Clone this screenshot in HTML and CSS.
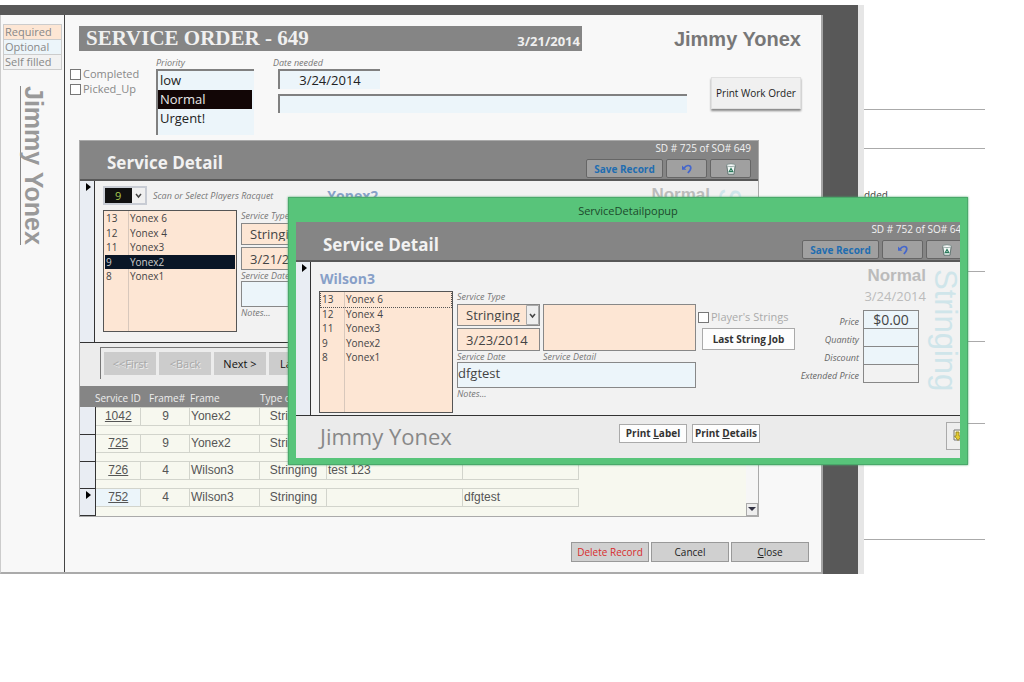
FILE: index.html
```html
<!DOCTYPE html>
<html lang="en">
<head>
<meta charset="utf-8">
<title>Service Order</title>
<link rel="stylesheet" href="styles.css">
</head>
<body>
<svg class="defs" width="0" height="0" aria-hidden="true">
  <symbol id="undo" viewBox="0 0 12 12">
    <path d="M1 2.6v4.2h4.4z" fill="#4466cc"/>
    <path d="M3.2 5.2C4.6 2 9.6 1.400 9.800 4.800c.1 2-1.300 3.500-3 5.200" fill="none" stroke="#4466cc" stroke-width="1.7"/>
  </symbol>
  <symbol id="bin" viewBox="0 0 12 12">
    <path d="M1.800 2.200 3 11.200h6l1.200-9z" fill="#f2f8f6" stroke="#48605c" stroke-width=".8"/>
    <ellipse cx="6" cy="2.200" rx="4.300" ry="1.300" fill="#fff" stroke="#708884" stroke-width=".7"/>
    <path d="M4.200 8.700 6 5.500l1.800 3.200z" fill="none" stroke="#2b7a5c" stroke-width="1.200"/>
  </symbol>
  <symbol id="exit" viewBox="0 0 14 14">
    <path d="M3 2h9v10H3z" fill="#fbf9d8" stroke="#777" stroke-width="1"/>
    <path d="M5 4h3v4h2.500L7 12.500 3.500 8H5z" fill="#e3cb2f" stroke="#8a7a20" stroke-width=".8"/>
    <path d="M9 3h3v10l-3-2z" fill="#5d6f52"/>
  </symbol>
</svg>
<div class="desktop">
  <main class="window">
    <div class="form">
      <aside class="strip">
        <ul class="legend">
          <li class="required">Required</li>
          <li class="optional">Optional</li>
          <li class="filled">Self filled</li>
        </ul>
        <div class="side-name">Jimmy Yonex</div>
      </aside>
      <div class="content">
        <header class="order-head">
          <div class="order-bar"><h1>SERVICE ORDER - 649</h1><span>3/21/2014</span></div>
          <div class="customer">Jimmy Yonex</div>
        </header>
        <section class="order-fields">
          <div class="flags">
            <label class="check"><input type="checkbox">Completed</label>
            <label class="check"><input type="checkbox">Picked_Up</label>
          </div>
          <div class="priority">
            <span class="hint" id="priority">Priority</span>
            <ul class="sunken" role="listbox" aria-labelledby="priority">
              <li role="option">low</li>
              <li role="option" aria-selected="true" class="chosen">Normal</li>
              <li role="option">Urgent!</li>
            </ul>
          </div>
          <div class="needed">
            <label class="hint" for="needed">Date needed</label>
            <input class="sunken date" id="needed" value="3/24/2014">
            <input class="sunken memo" aria-label="Memo">
          </div>
          <button class="print-order">Print Work Order</button>
        </section>

        <section class="panel">
          <div class="detail">
            <header class="detail-head">
              <h2>Service Detail</h2>
              <div class="detail-tools">
                <span>SD # 725 of SO# 649</span>
                <div class="tools">
                  <button class="save">Save Record</button>
                  <button aria-label="Undo"><svg><use href="#undo"/></svg></button>
                  <button aria-label="Delete"><svg><use href="#bin"/></svg></button>
                </div>
              </div>
            </header>
            <div class="record">
              <div class="selector"><i></i></div>
              <div class="record-body">
                <div class="record-left">
                  <div class="scan">
                    <select class="frame-pick" id="pick"><option>9</option></select>
                    <label class="hint" for="pick">Scan or Select Players Racquet</label>
                    <strong class="racquet">Yonex2</strong>
                  </div>
                  <div class="record-fields">
                    <ul class="frames">
                      <li><b>13</b>Yonex 6</li>
                      <li><b>12</b>Yonex 4</li>
                      <li><b>11</b>Yonex3</li>
                      <li class="chosen"><b>9</b>Yonex2</li>
                      <li><b>8</b>Yonex1</li>
                    </ul>
                    <div class="fields">
                      <label class="hint" for="type1">Service Type</label>
                      <select class="box type" id="type1"><option>Stringing</option></select>
                      <input class="box day" id="day1" value="3/21/2014">
                      <label class="hint" for="day1">Service Date</label>
                      <input class="box notes" id="notes1">
                      <label class="hint" for="notes1">Notes...</label>
                    </div>
                  </div>
                </div>
                <div class="record-right">
                  <div class="status"><strong>Normal</strong></div>
                  <div class="watermark">Stringing</div>
                </div>
              </div>
            </div>
          </div>
          <nav class="pager">
            <div class="pager-frame">
              <button disabled>&lt;&lt;First</button>
              <button disabled>&lt;Back</button>
              <button>Next &gt;</button>
              <button>Last &gt;</button>
            </div>
          </nav>
          <div class="lines">
            <table>
              <colgroup><col class="c-mark"><col class="c-id"><col class="c-num"><col class="c-frame"><col class="c-type"><col class="c-detail"><col class="c-notes"><col></colgroup>
              <thead><tr><th></th><th>Service ID</th><th>Frame#</th><th>Frame</th><th>Type of</th><th></th><th></th><th></th></tr></thead>
              <tbody>
                <tr><td></td><td><a href="#">1042</a></td><td><span>9</span></td><td><span>Yonex2</span></td><td><span>Stringing</span></td><td><span></span></td><td><span></span></td><td></td></tr>
                <tr><td></td><td><a href="#">725</a></td><td><span>9</span></td><td><span>Yonex2</span></td><td><span>Stringing</span></td><td><span></span></td><td><span></span></td><td></td></tr>
                <tr><td></td><td><a href="#">726</a></td><td><span>4</span></td><td><span>Wilson3</span></td><td><span>Stringing</span></td><td><span>test 123</span></td><td><span></span></td><td></td></tr>
                <tr class="current"><td><i></i></td><td><a href="#">752</a></td><td><span>4</span></td><td><span>Wilson3</span></td><td><span>Stringing</span></td><td><span></span></td><td><span>dfgtest</span></td><td></td></tr>
              </tbody>
            </table>
            <div class="scroll"><button aria-label="Scroll down"><i></i></button></div>
          </div>
        </section>
        <footer class="actions">
          <button class="delete">Delete Record</button>
          <button>Cancel</button>
          <button><u>C</u>lose</button>
        </footer>
      </div>
    </div>
  </main>
  <aside class="report">
    <hr class="r1"><hr class="r2">
    <p>dded.</p>
    <hr class="r3"><hr class="r4"><hr class="r5"><hr class="r6">
  </aside>

  <section class="popup" role="dialog" aria-labelledby="popup-title">
    <div class="popup-title" id="popup-title">ServiceDetailpopup</div>
    <div class="popup-view">
      <div class="popup-form">
        <div class="detail">
          <header class="detail-head">
            <h2>Service Detail</h2>
            <div class="detail-tools">
              <span>SD # 752 of SO# 649</span>
              <div class="tools">
                <button class="save">Save Record</button>
                <button aria-label="Undo"><svg><use href="#undo"/></svg></button>
                <button aria-label="Delete"><svg><use href="#bin"/></svg></button>
              </div>
            </div>
          </header>
          <div class="record">
            <div class="selector"><i></i></div>
            <div class="record-body">
              <div class="record-left">
                <div class="scan"><strong class="racquet">Wilson3</strong></div>
                <div class="record-fields">
                  <ul class="frames">
                    <li class="focus"><b>13</b>Yonex 6</li>
                    <li><b>12</b>Yonex 4</li>
                    <li><b>11</b>Yonex3</li>
                    <li><b>9</b>Yonex2</li>
                    <li><b>8</b>Yonex1</li>
                  </ul>
                  <div class="fields">
                    <label class="hint" for="type2">Service Type</label>
                    <select class="box type" id="type2"><option>Stringing</option></select>
                    <input class="box day" id="day2" value="3/23/2014">
                    <textarea class="box text" id="text2"></textarea>
                    <label class="hint" for="day2">Service Date</label>
                    <label class="hint" for="text2">Service Detail</label>
                    <input class="box notes" id="notes2" value="dfgtest">
                    <label class="hint" for="notes2">Notes...</label>
                  </div>
                  <div class="strings">
                    <label class="check"><input type="checkbox">Player's Strings</label>
                    <button class="white">Last String Job</button>
                  </div>
                </div>
              </div>
              <div class="record-right">
                <div class="status">
                  <strong>Normal</strong>
                  <span>3/24/2014</span>
                  <div class="prices">
                    <label for="price">Price</label><input id="price" value="$0.00">
                    <label for="qty">Quantity</label><input id="qty">
                    <label for="disc">Discount</label><input id="disc">
                    <label for="ext">Extended Price</label><input id="ext" class="plain" readonly>
                  </div>
                </div>
                <div class="watermark">Stringing</div>
              </div>
            </div>
          </div>
        </div>
        <footer class="popup-foot">
          <div class="popup-name">Jimmy Yonex</div>
          <button class="white">Print <u>L</u>abel</button>
          <button class="white">Print <u>D</u>etails</button>
          <button class="exit" aria-label="Close form"><svg><use href="#exit"/></svg></button>
        </footer>
      </div>
    </div>
  </section>
</div>
</body>
</html>
```
FILE: styles.css
```css
* { box-sizing: border-box; }
body { margin: 0; background: #fff; font-family: "Open Sans", "Noto Sans", sans-serif; font-size: 11px; line-height: 14px; color: #444; }
ul, h1, h2, p, hr { margin: 0; padding: 0; }
ul { list-style: none; }
button, input, select, textarea { font: inherit; color: inherit; margin: 0; border-radius: 0; }
button { padding: 0; white-space: nowrap; }
select { appearance: none; }
textarea { resize: none; }
.defs { display: block; }
.desktop { position: relative; display: flex; align-items: flex-start; min-height: 100vh; min-width: 1000px; padding-top: 5px; }
.hint { display: block; font-size: 9px; line-height: 12px; font-style: italic; color: #777; white-space: nowrap; }

/* main window */
.window { flex: 1; background: #585858; padding: 10px 35px 0 0; border-right: 6px solid #e6e6e6; }
.form { display: flex; background: #f8f8f8; border-left: 1px solid #ccc; border-right: 2px solid #a5a5a5; border-bottom: 2px solid #aaa; }
.strip { flex: 0 0 64px; padding: 9px 2px 0; border-right: 1px solid #444; }
.legend li { height: 15px; border: 1px solid #ccc; border-bottom: 0; padding-left: 1px; color: #888; line-height: 14px; }
.legend li:last-child { border-bottom: 1px solid #ccc; height: 16px; }
.required { background: #fde6d4; }
.optional { background: #ecf5fa; }
.filled { background: #f2f2f2; }
.side-name { writing-mode: vertical-rl; margin: 16px 0 0 17px; border-left: 1px solid #888; font: bold 25px/26px "Liberation Sans", sans-serif; color: #999; }
.content { flex: 1; min-width: 0; padding: 9px 12px 10px 14px; }
.order-head { display: flex; justify-content: space-between; align-items: center; padding-right: 8px; }
.order-bar { flex: 0 0 503px; height: 25px; display: flex; justify-content: space-between; align-items: center; background: #858585; padding: 0 2px 0 7px; color: #f0f0f0; }
.order-bar h1 { font: bold 21px/25px "Liberation Serif", serif; }
.order-bar span { font-size: 13px; font-weight: bold; padding-top: 6px; }
.customer { font: bold 20px/26px "Liberation Sans", sans-serif; color: #777; padding-top: 2px; }

.order-fields { display: flex; padding: 5px 8px 5px 0; margin-left: -9px; }
.flags { flex: 0 0 86px; padding-top: 10px; display: flex; flex-direction: column; gap: 1px; }
.check { display: flex; align-items: center; gap: 2px; color: #888; white-space: nowrap; }
.check input { appearance: none; width: 11px; height: 11px; border: 1px solid #777; background: #fff; flex: none; }
.priority { flex: 0 0 98px; }
.sunken { border: 0; border-top: 2px solid #808080; border-left: 2px solid #808080; background: #ecf5fa; color: #222; }
.priority .sunken { height: 66px; font-size: 13px; line-height: 19px; padding-right: 2px; }
.priority li { padding-left: 2px; }
.priority .chosen { background: #120606; color: #e8e8e8; }
.needed { flex: 1; padding-left: 24px; display: flex; flex-direction: column; align-items: flex-start; }
.needed .hint { margin-left: -5px; }
.date { width: 102px; height: 20px; font-size: 13px; text-align: center; padding: 0; }
.memo { width: 100%; height: 19px; margin-top: 5px; }
.print-order { width: 90px; height: 32px; margin: 20px 0 0 24px; border: 1px solid #e0e0e0; background: #f0f0f0; box-shadow: 0 2px 2px #888; color: #222; font-size: 10px; }

/* service detail form, shared by panel and popup */
.panel { width: 680px; border: 1px solid #aaa; background: #ececec; }
.detail { background: #f2f2f2; border-bottom: 1px solid #333; }
.detail-head { height: 40px; background: #858585; border-bottom: 2px solid #585858; display: flex; justify-content: space-between; padding: 1px 7px 0 27px; color: #f2f2f2; }
.detail-head h2 { font-size: 17px; line-height: 42px; }
.detail-tools { display: flex; flex-direction: column; align-items: flex-end; }
.detail-tools span { font-size: 10px; line-height: 12px; white-space: nowrap; }
.tools { display: flex; gap: 3px; margin-top: 5px; }
.tools button { width: 41px; height: 19px; border: 1px solid #666; border-radius: 2px; background: #a0a0a0; display: flex; align-items: center; justify-content: center; }
.tools .save { width: 77px; font-size: 10px; font-weight: bold; color: #1f6db0; }
.tools svg { width: 12px; height: 12px; }
.record { display: flex; height: 161px; }
.selector { flex: 0 0 15px; background: #e9edf3; border-right: 1px solid #333; }
.selector i, .current i { display: block; width: 0; height: 0; border: 4px solid transparent; border-left: 5px solid #000; border-right: 0; margin: 2px 0 0 6px; }
.record-body { flex: 1; min-width: 0; display: flex; justify-content: space-between; padding: 0 13px 0 8px; }
.scan { height: 29px; display: flex; align-items: center; gap: 6px; }
.popup .scan { padding: 4px 0 0 1px; }
.frame-pick { width: 44px; height: 19px; border: 2px solid #c8ccd4; color: #a8c850; padding: 0 10px; line-height: 14px; background: linear-gradient(90deg, #111 27px, transparent 27px), url("data:image/svg+xml,%3Csvg xmlns='http://www.w3.org/2000/svg' width='13' height='15'%3E%3Cpath d='M0 0h13v15H0z' fill='%23f0f0f0'/%3E%3Cpath d='M4 6l2.500 3 2.500-3' fill='none' stroke='%23444' stroke-width='1.500'/%3E%3C/svg%3E") right center no-repeat; }
.racquet { font-size: 14px; line-height: 18px; color: #88a0c8; }
.frame-pick ~ .racquet { margin-left: 48px; }
.record-fields { display: flex; }
.frames { width: 134px; height: 122px; border: 1px solid #555; padding: 0 1px; font-size: 10px; background: linear-gradient(#d8c8bc, #d8c8bc) 24px 0 / 1px 100% no-repeat #fde6d4; color: #444; }
.frames li { display: flex; height: 15px; line-height: 15px; padding-left: 1px; }
.frames li:nth-child(even) { height: 14px; }
.frames b { width: 24px; font-weight: normal; }
.frames .chosen { background: #0a1626; color: #ccc; }
.frames .focus { outline: 1px dotted #555; }
.fields { display: grid; grid-template: 13px 22px 2px 23px 11px 26px 12px / 83px 153px; column-gap: 3px; padding-left: 4px; }
.fields .hint { grid-area: 1 / 1; }
.fields .type { grid-area: 2 / 1; }
.fields .day { grid-area: 4 / 1; }
.fields .text { grid-area: 2 / 2 / 5 / 3; }
.fields .type ~ .hint { grid-area: 5 / 1; }
.fields .text ~ .hint + .hint { grid-area: 5 / 2; }
.fields .notes { grid-area: 6 / 1 / 7 / 3; background: #ecf5fa; font-size: 13px; padding: 0 0 4px; }
.fields .notes + .hint { grid-area: 7 / 1; }
.box { min-width: 0; width: 100%; height: 100%; border: 1px solid #888; background: #fde6d4; }
.type, .day { font-size: 13px; padding: 0 8px; }
.type { background: url("data:image/svg+xml,%3Csvg xmlns='http://www.w3.org/2000/svg' width='13' height='20'%3E%3Cpath d='M.5.5h12v19H.5z' fill='%23eee' stroke='%23aaa'/%3E%3Cpath d='M4 9l2.500 3L9 9' fill='none' stroke='%23444' stroke-width='1.500'/%3E%3C/svg%3E") right center no-repeat #fde6d4; }
.strings { padding: 19px 0 0 2px; }
.strings .check { color: #aaa; font-size: 11px; }
.white { border: 1px solid #aaa; background: #fdfdfd; font-size: 10px; font-weight: bold; color: #333; }
.strings .white { display: block; width: 93px; height: 22px; margin: 4px 0 0 4px; }
.record-right { display: flex; gap: 3px; }
.status { display: flex; flex-direction: column; align-items: flex-end; padding-top: 5px; color: #bbb; }
.status strong { font: bold 17px/18px "Liberation Sans", sans-serif; }
.status > span { font-size: 13px; line-height: 23px; }
.watermark { writing-mode: vertical-rl; height: 150px; padding-top: 7px; font: 31px/32px "Liberation Sans", sans-serif; color: #cfe5ea; }
.prices { display: grid; grid-template-columns: auto 56px; column-gap: 4px; margin-top: 2px; margin-right: 7px; }
.prices label { font-size: 9px; font-style: italic; color: #666; text-align: right; line-height: 24px; height: 18px; }
.prices input { width: 56px; height: 19px; margin-bottom: -1px; border: 1px solid #888; background: #ecf5fa; color: #444; font-size: 14px; text-align: center; padding: 0; }
.prices .plain { background: #f2f2f2; }

/* navigation and service lines */
.pager { height: 43px; padding: 4px 20px; }
.pager-frame { display: flex; gap: 3px; height: 32px; border-top: 1px solid #777; border-left: 1px solid #777; padding: 4px 3px; }
.pager button { width: 52px; border: 0; background: #ccc; color: #111; font-size: 11px; }
.pager button:disabled { color: #a8a8a8; text-shadow: 1px 1px #eee; }
.lines { display: flex; background: #f7f8ef; }
table { flex: 1; table-layout: fixed; border-collapse: collapse; font: 12px/17px "Liberation Sans", sans-serif; color: #555; }
.c-mark { width: 15px; } .c-id { width: 46px; } .c-num { width: 49px; } .c-frame { width: 70px; } .c-type { width: 67px; } .c-detail { width: 136px; } .c-notes { width: 116px; }
th { height: 21px; padding: 3px 0 0; background: #858585; color: #eee; font: 10px/16px "Open Sans", sans-serif; text-align: left; white-space: nowrap; }
th:nth-child(3) { padding-left: 8px; }
td { padding: 0; height: 27px; vertical-align: top; }
td:first-child { background: #e9edf3; border-right: 1px solid #333; border-bottom: 1px solid #333; }
td > span, td > a { display: block; height: 19px; border: 1px solid #d2d4cc; border-left: 0; padding-left: 1px; color: inherit; }
td:nth-child(2), td:nth-child(3), td:nth-child(5) { text-align: center; }
.current a { background: #ecf5fa; }
.scroll { flex: 0 0 12px; display: flex; align-items: flex-end; background: linear-gradient(#858585 21px, #f6f6f6 21px); }
.scroll button { width: 12px; height: 13px; border: 1px solid #aaa; background: #eee; }
.scroll i { display: block; width: 0; height: 0; border: 4px solid transparent; border-top-color: #334; border-bottom: 0; margin: 0 auto; }
.actions { display: flex; justify-content: flex-end; gap: 2px; margin-top: 25px; }
.actions button { width: 78px; height: 20px; border: 1px solid #999; background: #d0d0d0; color: #222; font-size: 10px; }
.actions .delete { color: #d82c2c; }

/* report page visible at the right */
.report { flex: 0 0 160px; padding-right: 39px; }
.report hr { border: 0; border-top: 1px solid #aaa; }
.report p { height: 14px; margin-top: 39px; font-size: 10px; }
.r1 { margin-top: 104px; } .r2 { margin-top: 38px; } .r3 { margin-top: 69px; } .r4 { margin-top: 69px; } .r5 { margin-top: 81px; } .r6 { margin-top: 115px; }

/* popup window floating over the form */
.popup { position: absolute; left: 288px; right: 56px; top: 197px; background: #58c47a; border: 1px solid #4aa86a; padding: 0 7px 6px; box-shadow: 0 0 2px #4aa86a; }
.popup-title { height: 24px; line-height: 25px; text-align: center; color: #1c4a2c; font-size: 11px; }
.popup-view { overflow: hidden; background: #ebebeb; }
.popup-form { margin-right: -14px; }
.popup .record { height: 153px; }
.popup .detail-head h2 { line-height: 44px; }
.popup .fields, .popup .strings { flex: none; }
.popup-foot { display: flex; align-items: center; gap: 5px; height: 42px; padding-left: 24px; }
.popup-name { flex: 0 0 294px; font-size: 22px; line-height: 30px; margin-bottom: 2px; color: #888; }
.popup-foot .white { width: 68px; height: 19px; margin-bottom: 8px; }
.exit { width: 28px; height: 28px; margin-left: auto; margin-bottom: 2px; border: 1px solid #aaa; background: #eee; text-align: left; padding-left: 4px; }
.exit svg { width: 14px; height: 14px; }
```
